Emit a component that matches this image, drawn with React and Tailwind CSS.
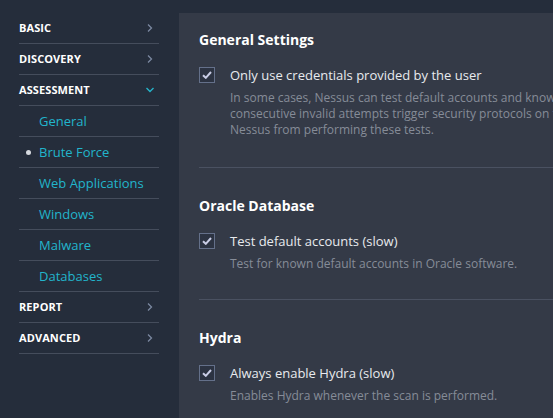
import React from "react";

const font = { fontFamily: '"Open Sans", "Noto Sans", sans-serif' };

function ChevronRight() {
  return (
    <svg width="6" height="10" viewBox="0 0 6 10" className="mr-[6px]">
      <path d="M1 1.5 L4.5 5 L1 8.5" fill="none" stroke="#7b88a0" strokeWidth="1.3" />
    </svg>
  );
}
function ChevronDown() {
  return (
    <svg width="10" height="6" viewBox="0 0 10 6" className="mr-[4px]">
      <path d="M1.5 1 L5 4.5 L8.5 1" fill="none" stroke="#26b3c9" strokeWidth="1.4" />
    </svg>
  );
}

function TopItem({ label, open }) {
  return (
    <div className="flex h-[31px] items-center justify-between border-b border-[#454d5c]">
      <span className="text-[11px] font-bold tracking-[0.1px] text-white">{label}</span>
      {open ? <ChevronDown /> : <ChevronRight />}
    </div>
  );
}

function SubItem({ label, active }) {
  return (
    <div className="relative flex h-[31px] items-center border-b border-[#454d5c] pl-[20px] pt-[2px]">
      {active && (
        <span className="absolute left-[7px] top-[13px] h-[5px] w-[5px] rounded-full bg-[#d6d9df]" />
      )}
      <span className="text-[13px] text-[#22b5cc]">{label}</span>
    </div>
  );
}

function Checkbox() {
  return (
    <div className="flex h-[16px] w-[16px] items-center justify-center border border-[#64708a] bg-[#2c3342]">
      <svg width="10" height="8" viewBox="0 0 10 8">
        <path d="M1 4.2 L3.8 6.8 L9 1" fill="none" stroke="#c9cde6" strokeWidth="2" />
      </svg>
    </div>
  );
}

function Section({ title, label, lines, pad }) {
  return (
    <div className={pad + " border-b border-[#4a5161]"}>
      <div className="h-[20px] text-[14px] font-bold leading-[20px] text-white">{title}</div>
      <div className="mt-[15px] flex h-[20px] items-center">
        <Checkbox />
        <span className="ml-[15px] text-[13px] leading-[20px] text-[#e8eaee]">{label}</span>
      </div>
      <div className="mt-[5px] pl-[31px] text-[12px] leading-[16px] text-[#868c98] whitespace-nowrap">
        {lines.map((l, i) => (
          <div key={i}>{l}</div>
        ))}
      </div>
    </div>
  );
}

export default function App() {
  return (
    <div className="flex h-[418px] w-[553px] overflow-hidden bg-[#252d3b]" style={font}>
      <div className="w-[179px] shrink-0 pl-[19px] pr-[20px] pt-[13px]">
        <TopItem label="BASIC" />
        <TopItem label="DISCOVERY" />
        <TopItem label="ASSESSMENT" open />
        <SubItem label="General" />
        <SubItem label="Brute Force" active />
        <SubItem label="Web Applications" />
        <SubItem label="Windows" />
        <SubItem label="Malware" />
        <SubItem label="Databases" />
        <TopItem label="REPORT" />
        <TopItem label="ADVANCED" />
      </div>
      <div className="mt-[13px] min-w-0 flex-1 overflow-hidden bg-[#343a47] pl-[20px]">
        <Section
          pad="pt-[17px] pb-[29px]"
          title="General Settings"
          label="Only use credentials provided by the user"
          lines={[
            "In some cases, Nessus can test default accounts and known default passwords. This can cause the account to be locked out if too many",
            "consecutive invalid attempts trigger security protocols on the operating system or application. By default, this setting is enabled to prevent",
            "Nessus from performing these tests.",
          ]}
        />
        <Section
          pad="pt-[28px] pb-[27px]"
          title="Oracle Database"
          label="Test default accounts (slow)"
          lines={["Test for known default accounts in Oracle software."]}
        />
        <Section
          pad="pt-[28px] pb-[28px]"
          title="Hydra"
          label="Always enable Hydra (slow)"
          lines={["Enables Hydra whenever the scan is performed."]}
        />
      </div>
    </div>
  );
}
